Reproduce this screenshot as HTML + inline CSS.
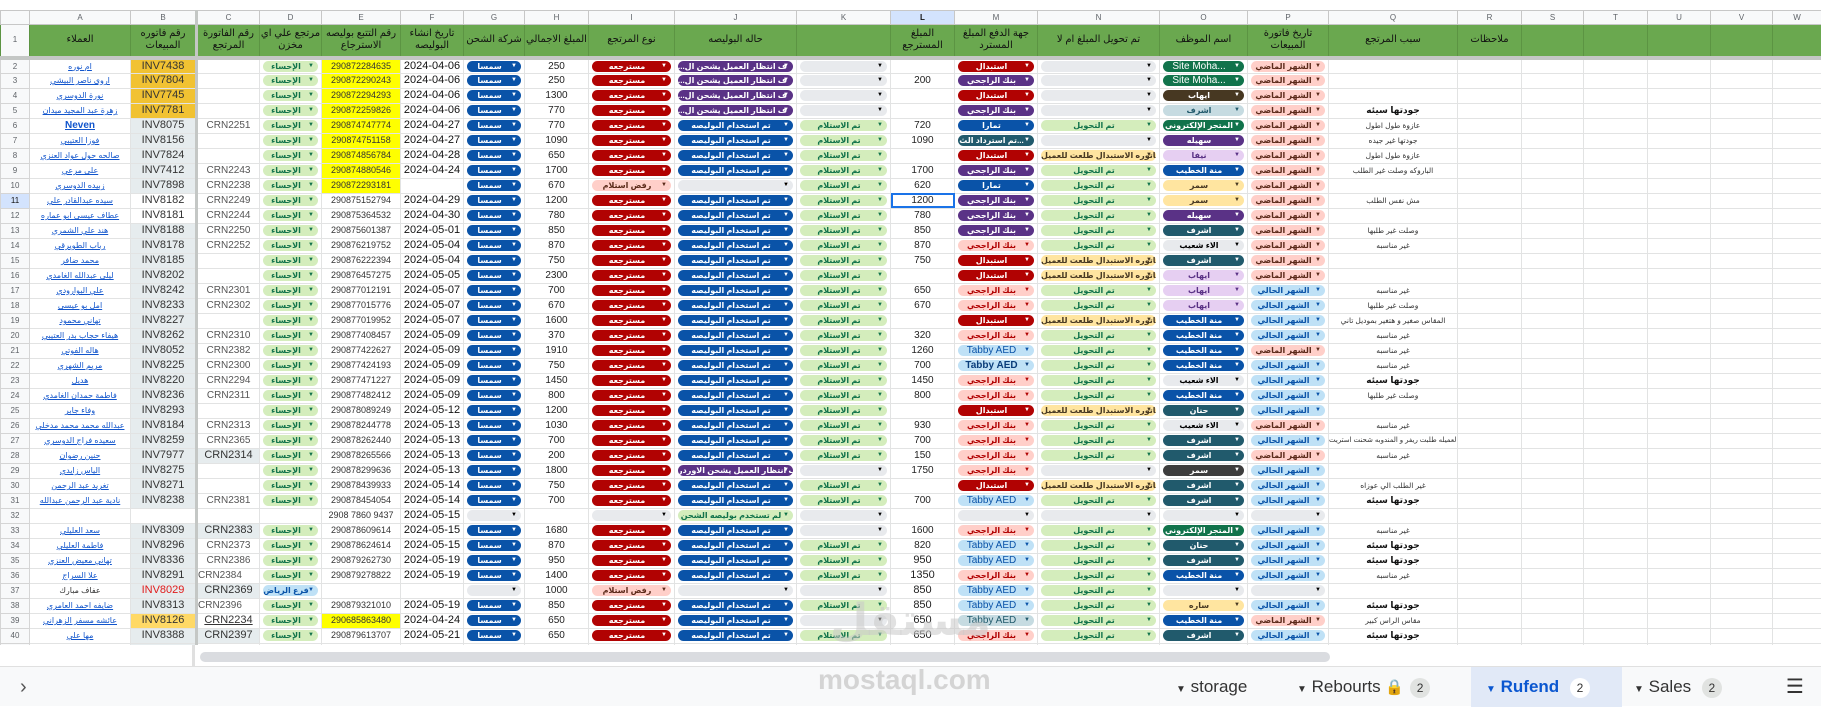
<!DOCTYPE html>
<html><head><meta charset="utf-8">
<style>
*{box-sizing:border-box;margin:0;padding:0}
body{width:1821px;height:706px;overflow:hidden;background:#fff;font-family:"Liberation Sans","DejaVu Sans",sans-serif;position:relative}
#grid{position:absolute;left:0;top:10px;width:1821px;height:635px;overflow:hidden}
table{border-collapse:collapse;table-layout:fixed;width:1821px}
td{border:1px solid #e2e3e3;height:15px;padding:0;font-size:10px;text-align:center;white-space:nowrap;overflow:hidden;color:#222;line-height:13px}
tr.ch0 td{height:14px;background:#f8f9fa;color:#5f6368;font-size:8px;border-color:#c7c7c7}
tr.h td{height:33px;background:#6aa84f;color:#111;font-size:10px;line-height:12px;white-space:normal;border-color:#5c9443;border-bottom:4px solid #c4c7c5}
td.n{background:#f8f9fa;color:#5f6368;font-size:8px;border-color:#d5d5d5}
td.b{border-right:3px solid #c4c7c5;background:#e6ecee;color:#333;font-size:11px}
td.bo{background:#f1c232}
td.bw{background:#fff}
td.c{color:#555;font-size:10px}
td.cb{background:#e6ecee;color:#333;font-size:11px}
td.a a{color:#1155cc;text-decoration:underline;font-size:8px}
td.e{font-size:9px;color:#333}
td.y{background:#ffff00}
td.f{font-size:11px;color:#111}
td.q{font-size:7.5px;color:#333}
td.qb{font-size:9px;font-weight:bold;color:#111}
i{font-style:normal}
.k{display:block;margin:0 3px;height:11px;border-radius:6px;font-size:8px;font-weight:bold;line-height:11px;text-align:center;position:relative;padding-right:9px;overflow:hidden;white-space:nowrap}
.k:after{content:"▼";position:absolute;right:4px;top:0;font-size:6px}
.lg{background:#d4edbc;color:#11734b}.db{background:#0a53a8;color:#fff}.rd{background:#b10202;color:#fff}
.pc{background:#ffcfc9;color:#5b2a1a}.gy{background:#e8eaed;color:#000}.pu{background:#5a3286;color:#fff}
.pk{background:#ffcfc9;color:#b10202}.lb{background:#bfe1f6;color:#0a53a8}.tl{background:#215a6c;color:#fff}
.yl{background:#ffe5a0;color:#473822}.gr{background:#11734b;color:#fff}.br{background:#473822;color:#fff}
.lp{background:#e6cff2;color:#5a3286}.dk{background:#3d3d3d;color:#fff}.sg{background:#c6dbe1;color:#215a6c}
.tb{font-size:10px;font-weight:normal}
#sb{position:absolute;left:200px;top:652px;width:1130px;height:10px;background:#dadce0;border-radius:5px}
#tabs{position:absolute;left:0;top:666px;width:1821px;height:40px;background:#f8f9fa;border-top:1px solid #e0e0e0;font-size:17px;color:#333}
.t{position:absolute;top:0;height:40px;line-height:40px}
.bd{display:inline-block;width:20px;height:20px;line-height:20px;border-radius:10px;background:#e1e3e1;font-size:12px;text-align:center;margin-left:6px;vertical-align:middle}
#wm{position:absolute;left:818px;top:664px;font-size:28px;color:#d4d4d4;font-weight:bold}
#wm2{position:absolute;left:830px;top:595px;font-size:44px;color:rgba(200,200,200,.55);font-weight:bold;font-family:"DejaVu Sans",sans-serif}
</style></head><body>
<div id="grid">
<table>
<colgroup><col style="width:29px"><col style="width:101px"><col style="width:66px"><col style="width:63px"><col style="width:62px"><col style="width:79px"><col style="width:63px"><col style="width:61px"><col style="width:64px"><col style="width:86px"><col style="width:122px"><col style="width:94px"><col style="width:64px"><col style="width:83px"><col style="width:122px"><col style="width:88px"><col style="width:81px"><col style="width:129px"><col style="width:64px"><col style="width:62px"><col style="width:64px"><col style="width:63px"><col style="width:62px"><col style="width:49px"></colgroup>
<tr class="ch0"><td></td><td>A</td><td style="border-right:3px solid #c4c7c5">B</td><td>C</td><td>D</td><td>E</td><td>F</td><td>G</td><td>H</td><td>I</td><td>J</td><td>K</td><td style="background:#d3e3fd;color:#111;font-weight:bold">L</td><td>M</td><td>N</td><td>O</td><td>P</td><td>Q</td><td>R</td><td>S</td><td>T</td><td>U</td><td>V</td><td>W</td></tr>
<tr class="h"><td style="background:#f8f9fa;color:#5f6368;font-size:8px">1</td><td>العملاء</td><td style="border-right:3px solid #c4c7c5">رقم فاتوره المبيعات</td><td>رقم الفاتورة المرتجع</td><td>مرتجع علي اي مخزن</td><td>رقم التتبع بوليصه الاسترجاع</td><td>تاريخ انشاء البوليصه</td><td>شركة الشحن</td><td>المبلغ الاجمالي</td><td>نوع المرتجع</td><td>حاله البوليصه</td><td></td><td>المبلغ المسترجع</td><td>جهة الدفع المبلغ المسترد</td><td>تم تحويل المبلغ ام لا</td><td>اسم الموظف</td><td>تاريخ فاتورة المبيعات</td><td>سبب المرتجع</td><td>ملاحظات</td><td></td><td></td><td></td><td></td><td></td></tr>

<tr><td class="n">2</td><td class="a"><a>ام نوره</a></td><td class="b bo">INV7438</td><td class="c"></td><td><i class="k lg">الإحساء</i></td><td class="e y">290872284635</td><td class="f">2024-04-06</td><td><i class="k db">سمسا</i></td><td>250</td><td><i class="k rd">مسترجعه</i></td><td><i class="k pu">...ف انتظار العميل يشحن ال</i></td><td><i class="k gy"></i></td><td></td><td><i class="k rd">استبدال</i></td><td><i class="k gy"></i></td><td><i class="k gr tb">Site Moha...</i></td><td><i class="k pc">الشهر الماضي</i></td><td class="q"></td><td></td><td></td><td></td><td></td><td></td><td></td></tr>
<tr><td class="n">3</td><td class="a"><a>اروى ناصر البيشي</a></td><td class="b bo">INV7804</td><td class="c"></td><td><i class="k lg">الإحساء</i></td><td class="e y">290872290243</td><td class="f">2024-04-06</td><td><i class="k db">سمسا</i></td><td>250</td><td><i class="k rd">مسترجعه</i></td><td><i class="k pu">...ف انتظار العميل يشحن ال</i></td><td><i class="k gy"></i></td><td>200</td><td><i class="k pu">بنك الراجحي</i></td><td><i class="k gy"></i></td><td><i class="k gr tb">Site Moha...</i></td><td><i class="k pc">الشهر الماضي</i></td><td class="q"></td><td></td><td></td><td></td><td></td><td></td><td></td></tr>
<tr><td class="n">4</td><td class="a"><a>نورة الدوسري</a></td><td class="b bo">INV7745</td><td class="c"></td><td><i class="k lg">الإحساء</i></td><td class="e y">290872294293</td><td class="f">2024-04-06</td><td><i class="k db">سمسا</i></td><td>1300</td><td><i class="k rd">مسترجعه</i></td><td><i class="k pu">...ف انتظار العميل يشحن ال</i></td><td><i class="k gy"></i></td><td></td><td><i class="k rd">استبدال</i></td><td><i class="k gy"></i></td><td><i class="k br">ايهاب</i></td><td><i class="k pc">الشهر الماضي</i></td><td class="q"></td><td></td><td></td><td></td><td></td><td></td><td></td></tr>
<tr><td class="n">5</td><td class="a"><a>زهرة عبد المجيد ميدان</a></td><td class="b bo">INV7781</td><td class="c"></td><td><i class="k lg">الإحساء</i></td><td class="e y">290872259826</td><td class="f">2024-04-06</td><td><i class="k db">سمسا</i></td><td>770</td><td><i class="k rd">مسترجعه</i></td><td><i class="k pu">...ف انتظار العميل يشحن ال</i></td><td><i class="k gy"></i></td><td></td><td><i class="k pu">بنك الراجحي</i></td><td><i class="k gy"></i></td><td><i class="k sg">اشرف</i></td><td><i class="k pc">الشهر الماضي</i></td><td class="qb">جودتها سيئه</td><td></td><td></td><td></td><td></td><td></td><td></td></tr>
<tr><td class="n">6</td><td class="a"><a style="font-size:10px;font-weight:bold">Neven</a></td><td class="b">INV8075</td><td class="c">CRN2251</td><td><i class="k lg">الإحساء</i></td><td class="e y">290874747774</td><td class="f">2024-04-27</td><td><i class="k db">سمسا</i></td><td>770</td><td><i class="k rd">مسترجعه</i></td><td><i class="k db">تم استخدام البوليصه</i></td><td><i class="k lg">تم الاستلام</i></td><td>720</td><td><i class="k db">تمارا</i></td><td><i class="k lg">تم التحويل</i></td><td><i class="k gr">المتجر الإلكتروني</i></td><td><i class="k pc">الشهر الماضي</i></td><td class="q">عازوة طول اطول</td><td></td><td></td><td></td><td></td><td></td><td></td></tr>
<tr><td class="n">7</td><td class="a"><a>فوزا العتيبي</a></td><td class="b">INV8156</td><td class="c"></td><td><i class="k lg">الإحساء</i></td><td class="e y">290874751158</td><td class="f">2024-04-27</td><td><i class="k db">سمسا</i></td><td>1090</td><td><i class="k rd">مسترجعه</i></td><td><i class="k db">تم استخدام البوليصه</i></td><td><i class="k lg">تم الاستلام</i></td><td>1090</td><td><i class="k tl">تم استرداد الث...</i></td><td><i class="k gy"></i></td><td><i class="k pu">سهيله</i></td><td><i class="k pc">الشهر الماضي</i></td><td class="q">جودتها غير جيده</td><td></td><td></td><td></td><td></td><td></td><td></td></tr>
<tr><td class="n">8</td><td class="a"><a>صالحه حول عواد العنزي</a></td><td class="b">INV7824</td><td class="c"></td><td><i class="k lg">الإحساء</i></td><td class="e y">290874856784</td><td class="f">2024-04-28</td><td><i class="k db">سمسا</i></td><td>650</td><td><i class="k rd">مسترجعه</i></td><td><i class="k db">تم استخدام البوليصه</i></td><td><i class="k lg">تم الاستلام</i></td><td></td><td><i class="k rd">استبدال</i></td><td><i class="k yl">فاتوره الاستبدال طلعت للعميل</i></td><td><i class="k lp">نيفا</i></td><td><i class="k pc">الشهر الماضي</i></td><td class="q">عازوة طول اطول</td><td></td><td></td><td></td><td></td><td></td><td></td></tr>
<tr><td class="n">9</td><td class="a"><a>على مرعي</a></td><td class="b">INV7412</td><td class="c">CRN2243</td><td><i class="k lg">الإحساء</i></td><td class="e y">290874880546</td><td class="f">2024-04-24</td><td><i class="k db">سمسا</i></td><td>1700</td><td><i class="k rd">مسترجعه</i></td><td><i class="k db">تم استخدام البوليصه</i></td><td><i class="k lg">تم الاستلام</i></td><td>1700</td><td><i class="k pu">بنك الراجحي</i></td><td><i class="k lg">تم التحويل</i></td><td><i class="k db">منة الخطيب</i></td><td><i class="k pc">الشهر الماضي</i></td><td class="q">الباروكه وصلت غير الطلب</td><td></td><td></td><td></td><td></td><td></td><td></td></tr>
<tr><td class="n">10</td><td class="a"><a>زبيده الدوسري</a></td><td class="b">INV7898</td><td class="c">CRN2238</td><td><i class="k lg">الإحساء</i></td><td class="e y">290872293181</td><td class="f"></td><td><i class="k db">سمسا</i></td><td>670</td><td><i class="k pc">رفض استلام</i></td><td><i class="k gy"></i></td><td><i class="k lg">تم الاستلام</i></td><td>620</td><td><i class="k db">تمارا</i></td><td><i class="k lg">تم التحويل</i></td><td><i class="k yl">سمر</i></td><td><i class="k pc">الشهر الماضي</i></td><td class="q"></td><td></td><td></td><td></td><td></td><td></td><td></td></tr>
<tr><td class="n" style="background:#d3e3fd;color:#111">11</td><td class="a"><a>سيده عبدالقادر علي</a></td><td class="b bw">INV8182</td><td class="c">CRN2249</td><td><i class="k lg">الإحساء</i></td><td class="e">290875152794</td><td class="f">2024-04-29</td><td><i class="k db">سمسا</i></td><td>1200</td><td><i class="k rd">مسترجعه</i></td><td><i class="k db">تم استخدام البوليصه</i></td><td><i class="k lg">تم الاستلام</i></td><td style="outline:2px solid #1a73e8;outline-offset:-2px">1200</td><td><i class="k pu">بنك الراجحي</i></td><td><i class="k lg">تم التحويل</i></td><td><i class="k yl">سمر</i></td><td><i class="k pc">الشهر الماضي</i></td><td class="q">مش نفس الطلب</td><td></td><td></td><td></td><td></td><td></td><td></td></tr>
<tr><td class="n">12</td><td class="a"><a>عطاف عيسى ابو عماره</a></td><td class="b bw">INV8181</td><td class="c">CRN2244</td><td><i class="k lg">الإحساء</i></td><td class="e">290875364532</td><td class="f">2024-04-30</td><td><i class="k db">سمسا</i></td><td>780</td><td><i class="k rd">مسترجعه</i></td><td><i class="k db">تم استخدام البوليصه</i></td><td><i class="k lg">تم الاستلام</i></td><td>780</td><td><i class="k pu">بنك الراجحي</i></td><td><i class="k lg">تم التحويل</i></td><td><i class="k pu">سهيله</i></td><td><i class="k pc">الشهر الماضي</i></td><td class="q"></td><td></td><td></td><td></td><td></td><td></td><td></td></tr>
<tr><td class="n">13</td><td class="a"><a>هند علي الشمري</a></td><td class="b">INV8188</td><td class="c">CRN2250</td><td><i class="k lg">الاحساء</i></td><td class="e">290875601387</td><td class="f">2024-05-01</td><td><i class="k db">سمسا</i></td><td>850</td><td><i class="k rd">مسترجعه</i></td><td><i class="k db">تم استخدام البوليصه</i></td><td><i class="k lg">تم الاستلام</i></td><td>850</td><td><i class="k pu">بنك الراجحي</i></td><td><i class="k lg">تم التحويل</i></td><td><i class="k tl">اشرف</i></td><td><i class="k pc">الشهر الماضي</i></td><td class="q">وصلت غير طلبها</td><td></td><td></td><td></td><td></td><td></td><td></td></tr>
<tr><td class="n">14</td><td class="a"><a>رباب الطويرقي</a></td><td class="b">INV8178</td><td class="c">CRN2252</td><td><i class="k lg">الاحساء</i></td><td class="e">290876219752</td><td class="f">2024-05-04</td><td><i class="k db">سمسا</i></td><td>870</td><td><i class="k rd">مسترجعه</i></td><td><i class="k db">تم استخدام البوليصه</i></td><td><i class="k lg">تم الاستلام</i></td><td>870</td><td><i class="k pk">بنك الراجحي</i></td><td><i class="k lg">تم التحويل</i></td><td><i class="k gy">الاء شعيب</i></td><td><i class="k pc">الشهر الماضي</i></td><td class="q">غير مناسبه</td><td></td><td></td><td></td><td></td><td></td><td></td></tr>
<tr><td class="n">15</td><td class="a"><a>محمد ضافر</a></td><td class="b">INV8185</td><td class="c"></td><td><i class="k lg">الاحساء</i></td><td class="e">290876222394</td><td class="f">2024-05-04</td><td><i class="k db">سمسا</i></td><td>750</td><td><i class="k rd">مسترجعه</i></td><td><i class="k db">تم استخدام البوليصه</i></td><td><i class="k lg">تم الاستلام</i></td><td>750</td><td><i class="k rd">استبدال</i></td><td><i class="k yl">فاتوره الاستبدال طلعت للعميل</i></td><td><i class="k tl">اشرف</i></td><td><i class="k pc">الشهر الماضي</i></td><td class="q"></td><td></td><td></td><td></td><td></td><td></td><td></td></tr>
<tr><td class="n">16</td><td class="a"><a>ليلى عبدالله الغامدي</a></td><td class="b">INV8202</td><td class="c"></td><td><i class="k lg">الاحساء</i></td><td class="e">290876457275</td><td class="f">2024-05-05</td><td><i class="k db">سمسا</i></td><td>2300</td><td><i class="k rd">مسترجعه</i></td><td><i class="k db">تم استخدام البوليصه</i></td><td><i class="k lg">تم الاستلام</i></td><td></td><td><i class="k rd">استبدال</i></td><td><i class="k yl">فاتوره الاستبدال طلعت للعميل</i></td><td><i class="k lp">ايهاب</i></td><td><i class="k pc">الشهر الماضي</i></td><td class="q"></td><td></td><td></td><td></td><td></td><td></td><td></td></tr>
<tr><td class="n">17</td><td class="a"><a>علي البوارودي</a></td><td class="b">INV8242</td><td class="c">CRN2301</td><td><i class="k lg">الإحساء</i></td><td class="e">290877012191</td><td class="f">2024-05-07</td><td><i class="k db">سمسا</i></td><td>700</td><td><i class="k rd">مسترجعه</i></td><td><i class="k db">تم استخدام البوليصه</i></td><td><i class="k lg">تم الاستلام</i></td><td>650</td><td><i class="k pk">بنك الراجحي</i></td><td><i class="k lg">تم التحويل</i></td><td><i class="k lp">ايهاب</i></td><td><i class="k lb">الشهر الحالي</i></td><td class="q">غير مناسبه</td><td></td><td></td><td></td><td></td><td></td><td></td></tr>
<tr><td class="n">18</td><td class="a"><a>امل بو عيسى</a></td><td class="b">INV8233</td><td class="c">CRN2302</td><td><i class="k lg">الإحساء</i></td><td class="e">290877015776</td><td class="f">2024-05-07</td><td><i class="k db">سمسا</i></td><td>670</td><td><i class="k rd">مسترجعه</i></td><td><i class="k db">تم استخدام البوليصه</i></td><td><i class="k lg">تم الاستلام</i></td><td>670</td><td><i class="k pk">بنك الراجحي</i></td><td><i class="k lg">تم التحويل</i></td><td><i class="k lp">ايهاب</i></td><td><i class="k lb">الشهر الحالي</i></td><td class="q">وصلت غير طلبها</td><td></td><td></td><td></td><td></td><td></td><td></td></tr>
<tr><td class="n">19</td><td class="a"><a>تهاني محمود</a></td><td class="b">INV8227</td><td class="c"></td><td><i class="k lg">الإحساء</i></td><td class="e">290877019952</td><td class="f">2024-05-07</td><td><i class="k db">سمسا</i></td><td>1600</td><td><i class="k rd">مسترجعه</i></td><td><i class="k db">تم استخدام البوليصه</i></td><td><i class="k lg">تم الاستلام</i></td><td></td><td><i class="k rd">استبدال</i></td><td><i class="k yl">فاتوره الاستبدال طلعت للعميل</i></td><td><i class="k db">منة الخطيب</i></td><td><i class="k lb">الشهر الحالي</i></td><td class="q">المقاس صغير و هتغير بموديل تاني</td><td></td><td></td><td></td><td></td><td></td><td></td></tr>
<tr><td class="n">20</td><td class="a"><a>هيفاء حجاب بدر العتيبي</a></td><td class="b">INV8262</td><td class="c">CRN2310</td><td><i class="k lg">الإحساء</i></td><td class="e">290877408457</td><td class="f">2024-05-09</td><td><i class="k db">سمسا</i></td><td>370</td><td><i class="k rd">مسترجعه</i></td><td><i class="k db">تم استخدام البوليصه</i></td><td><i class="k lg">تم الاستلام</i></td><td>320</td><td><i class="k pk">بنك الراجحي</i></td><td><i class="k lg">تم التحويل</i></td><td><i class="k db">منة الخطيب</i></td><td><i class="k lb">الشهر الحالي</i></td><td class="q">غير مناسبه</td><td></td><td></td><td></td><td></td><td></td><td></td></tr>
<tr><td class="n">21</td><td class="a"><a>هاله الفوتي</a></td><td class="b">INV8052</td><td class="c">CRN2382</td><td><i class="k lg">الإحساء</i></td><td class="e">290877422627</td><td class="f">2024-05-09</td><td><i class="k db">سمسا</i></td><td>1910</td><td><i class="k rd">مسترجعه</i></td><td><i class="k db">تم استخدام البوليصه</i></td><td><i class="k lg">تم الاستلام</i></td><td>1260</td><td><i class="k lb tb">Tabby AED</i></td><td><i class="k lg">تم التحويل</i></td><td><i class="k db">منة الخطيب</i></td><td><i class="k pc">الشهر الماضي</i></td><td class="q">غير مناسبه</td><td></td><td></td><td></td><td></td><td></td><td></td></tr>
<tr><td class="n">22</td><td class="a"><a>مريم الشهري</a></td><td class="b">INV8225</td><td class="c">CRN2300</td><td><i class="k lg">الإحساء</i></td><td class="e">290877424193</td><td class="f">2024-05-09</td><td><i class="k db">سمسا</i></td><td>750</td><td><i class="k rd">مسترجعه</i></td><td><i class="k db">تم استخدام البوليصه</i></td><td><i class="k lg">تم الاستلام</i></td><td>700</td><td><i class="k lb tb" style="font-weight:bold;color:#0a3d7a">Tabby AED</i></td><td><i class="k lg">تم التحويل</i></td><td><i class="k db">منة الخطيب</i></td><td><i class="k lb">الشهر الحالي</i></td><td class="q">غير مناسبه</td><td></td><td></td><td></td><td></td><td></td><td></td></tr>
<tr><td class="n">23</td><td class="a"><a>هديل</a></td><td class="b">INV8220</td><td class="c">CRN2294</td><td><i class="k lg">الإحساء</i></td><td class="e">290877471227</td><td class="f">2024-05-09</td><td><i class="k db">سمسا</i></td><td>1450</td><td><i class="k rd">مسترجعه</i></td><td><i class="k db">تم استخدام البوليصه</i></td><td><i class="k lg">تم الاستلام</i></td><td>1450</td><td><i class="k pk">بنك الراجحي</i></td><td><i class="k lg">تم التحويل</i></td><td><i class="k gy">الاء شعيب</i></td><td><i class="k lb">الشهر الحالي</i></td><td class="qb">جودتها سيئه</td><td></td><td></td><td></td><td></td><td></td><td></td></tr>
<tr><td class="n">24</td><td class="a"><a>فاطمة حمدان الغامدي</a></td><td class="b">INV8236</td><td class="c">CRN2311</td><td><i class="k lg">الإحساء</i></td><td class="e">290877482412</td><td class="f">2024-05-09</td><td><i class="k db">سمسا</i></td><td>800</td><td><i class="k rd">مسترجعه</i></td><td><i class="k db">تم استخدام البوليصه</i></td><td><i class="k lg">تم الاستلام</i></td><td>800</td><td><i class="k pk">بنك الراجحي</i></td><td><i class="k lg">تم التحويل</i></td><td><i class="k db">منة الخطيب</i></td><td><i class="k lb">الشهر الحالي</i></td><td class="q">وصلت غير طلبها</td><td></td><td></td><td></td><td></td><td></td><td></td></tr>
<tr><td class="n">25</td><td class="a"><a>وفاء جابر</a></td><td class="b">INV8293</td><td class="c"></td><td><i class="k lg">الإحساء</i></td><td class="e">290878089249</td><td class="f">2024-05-12</td><td><i class="k db">سمسا</i></td><td>1200</td><td><i class="k rd">مسترجعه</i></td><td><i class="k db">تم استخدام البوليصه</i></td><td><i class="k lg">تم الاستلام</i></td><td></td><td><i class="k rd">استبدال</i></td><td><i class="k yl">فاتوره الاستبدال طلعت للعميل</i></td><td><i class="k tl">حنان</i></td><td><i class="k lb">الشهر الحالي</i></td><td class="q"></td><td></td><td></td><td></td><td></td><td></td><td></td></tr>
<tr><td class="n">26</td><td class="a"><a>عبدالله محمد محمد مدخلي</a></td><td class="b">INV8184</td><td class="c">CRN2313</td><td><i class="k lg">الإحساء</i></td><td class="e">290878244778</td><td class="f">2024-05-13</td><td><i class="k db">سمسا</i></td><td>1030</td><td><i class="k rd">مسترجعه</i></td><td><i class="k db">تم استخدام البوليصه</i></td><td><i class="k lg">تم الاستلام</i></td><td>930</td><td><i class="k pk">بنك الراجحي</i></td><td><i class="k lg">تم التحويل</i></td><td><i class="k gy">الاء شعيب</i></td><td><i class="k pc">الشهر الماضي</i></td><td class="q">غير مناسبه</td><td></td><td></td><td></td><td></td><td></td><td></td></tr>
<tr><td class="n">27</td><td class="a"><a>سعيده فراج الدوسري</a></td><td class="b">INV8259</td><td class="c">CRN2365</td><td><i class="k lg">الإحساء</i></td><td class="e">290878262440</td><td class="f">2024-05-13</td><td><i class="k db">سمسا</i></td><td>700</td><td><i class="k rd">مسترجعه</i></td><td><i class="k db">تم استخدام البوليصه</i></td><td><i class="k lg">تم الاستلام</i></td><td>700</td><td><i class="k pk">بنك الراجحي</i></td><td><i class="k lg">تم التحويل</i></td><td><i class="k tl">اشرف</i></td><td><i class="k lb">الشهر الحالي</i></td><td class="q" style="font-size:7px">العميله طلبت ريفر و المندوبه شحنت استريت</td><td></td><td></td><td></td><td></td><td></td><td></td></tr>
<tr><td class="n">28</td><td class="a"><a>حنين رضوان</a></td><td class="b">INV7977</td><td class="cb">CRN2314</td><td><i class="k lg">الإحساء</i></td><td class="e">290878265566</td><td class="f">2024-05-13</td><td><i class="k db">سمسا</i></td><td>200</td><td><i class="k rd">مسترجعه</i></td><td><i class="k db">تم استخدام البوليصه</i></td><td><i class="k lg">تم الاستلام</i></td><td>150</td><td><i class="k pk">بنك الراجحي</i></td><td><i class="k lg">تم التحويل</i></td><td><i class="k tl">اشرف</i></td><td><i class="k pc">الشهر الماضي</i></td><td class="q">غير مناسبه</td><td></td><td></td><td></td><td></td><td></td><td></td></tr>
<tr><td class="n">29</td><td class="a"><a>الياس زايدي</a></td><td class="b">INV8275</td><td class="c"></td><td><i class="k lg">الإحساء</i></td><td class="e">290878299636</td><td class="f">2024-05-13</td><td><i class="k db">سمسا</i></td><td>1800</td><td><i class="k rd">مسترجعه</i></td><td><i class="k pu">ف انتظار العميل يشحن الاوردر</i></td><td><i class="k gy"></i></td><td>1750</td><td><i class="k pk">بنك الراجحي</i></td><td><i class="k gy"></i></td><td><i class="k dk">سمر</i></td><td><i class="k lb">الشهر الحالي</i></td><td class="q"></td><td></td><td></td><td></td><td></td><td></td><td></td></tr>
<tr><td class="n">30</td><td class="a"><a>تغريد عبد الرحمن</a></td><td class="b">INV8271</td><td class="c"></td><td><i class="k lg">الإحساء</i></td><td class="e">290878439933</td><td class="f">2024-05-14</td><td><i class="k db">سمسا</i></td><td>750</td><td><i class="k rd">مسترجعه</i></td><td><i class="k db">تم استخدام البوليصه</i></td><td><i class="k lg">تم الاستلام</i></td><td></td><td><i class="k rd">استبدال</i></td><td><i class="k yl">فاتوره الاستبدال طلعت للعميل</i></td><td><i class="k tl">اشرف</i></td><td><i class="k lb">الشهر الحالي</i></td><td class="q">غير الطلب الي عوزاه</td><td></td><td></td><td></td><td></td><td></td><td></td></tr>
<tr><td class="n">31</td><td class="a"><a>نادية عبد الرحمن عبدالله</a></td><td class="b">INV8238</td><td class="c">CRN2381</td><td><i class="k lg">الإحساء</i></td><td class="e">290878454054</td><td class="f">2024-05-14</td><td><i class="k db">سمسا</i></td><td>700</td><td><i class="k rd">مسترجعه</i></td><td><i class="k db">تم استخدام البوليصه</i></td><td><i class="k lg">تم الاستلام</i></td><td>700</td><td><i class="k lb tb">Tabby AED</i></td><td><i class="k lg">تم التحويل</i></td><td><i class="k tl">اشرف</i></td><td><i class="k lb">الشهر الحالي</i></td><td class="qb">جودتها سيئه</td><td></td><td></td><td></td><td></td><td></td><td></td></tr>
<tr><td class="n">32</td><td class="a"></td><td class="b bw"></td><td class="c"></td><td></td><td class="e">2908 7860 9437</td><td class="f">2024-05-15</td><td><i class="k gy"></i></td><td></td><td><i class="k gy"></i></td><td><i class="k lg">لم تستخدم بوليصه الشحن</i></td><td><i class="k gy"></i></td><td></td><td><i class="k gy"></i></td><td><i class="k gy"></i></td><td><i class="k gy"></i></td><td><i class="k gy"></i></td><td class="q"></td><td></td><td></td><td></td><td></td><td></td><td></td></tr>
<tr><td class="n">33</td><td class="a"><a>سعد العليلي</a></td><td class="b">INV8309</td><td class="cb">CRN2383</td><td><i class="k lg">الإحساء</i></td><td class="e">290878609614</td><td class="f">2024-05-15</td><td><i class="k db">سمسا</i></td><td>1680</td><td><i class="k rd">مسترجعه</i></td><td><i class="k db">تم استخدام البوليصه</i></td><td><i class="k gy"></i></td><td>1600</td><td><i class="k pk">بنك الراجحي</i></td><td><i class="k lg">تم التحويل</i></td><td><i class="k gr">المتجر الإلكتروني</i></td><td><i class="k lb">الشهر الحالي</i></td><td class="q">غير مناسبه</td><td></td><td></td><td></td><td></td><td></td><td></td></tr>
<tr><td class="n">34</td><td class="a"><a>فاطمة العليلي</a></td><td class="b">INV8296</td><td class="c">CRN2373</td><td><i class="k lg">الإحساء</i></td><td class="e">290878624614</td><td class="f">2024-05-15</td><td><i class="k db">سمسا</i></td><td>870</td><td><i class="k rd">مسترجعه</i></td><td><i class="k db">تم استخدام البوليصه</i></td><td><i class="k lg">تم الاستلام</i></td><td>820</td><td><i class="k lb tb">Tabby AED</i></td><td><i class="k lg">تم التحويل</i></td><td><i class="k tl">حنان</i></td><td><i class="k lb">الشهر الحالي</i></td><td class="qb">جودتها سيئه</td><td></td><td></td><td></td><td></td><td></td><td></td></tr>
<tr><td class="n">35</td><td class="a"><a>تهاني معيض العنزي</a></td><td class="b">INV8336</td><td class="c">CRN2386</td><td><i class="k lg">الإحساء</i></td><td class="e">290879262730</td><td class="f">2024-05-19</td><td><i class="k db">سمسا</i></td><td>950</td><td><i class="k rd">مسترجعه</i></td><td><i class="k db">تم استخدام البوليصه</i></td><td><i class="k lg">تم الاستلام</i></td><td style="font-size:11px">950</td><td><i class="k lb tb">Tabby AED</i></td><td><i class="k lg">تم التحويل</i></td><td><i class="k tl">اشرف</i></td><td><i class="k lb">الشهر الحالي</i></td><td class="qb">جودتها سيئه</td><td></td><td></td><td></td><td></td><td></td><td></td></tr>
<tr><td class="n">36</td><td class="a"><a>علا السراج</a></td><td class="b">INV8291</td><td class="c" style="text-align:left">CRN2384</td><td><i class="k lg">الإحساء</i></td><td class="e">290879278822</td><td class="f">2024-05-19</td><td><i class="k db">سمسا</i></td><td>1400</td><td><i class="k rd">مسترجعه</i></td><td><i class="k db">تم استخدام البوليصه</i></td><td><i class="k lg">تم الاستلام</i></td><td style="font-size:11px">1350</td><td><i class="k pk">بنك الراجحي</i></td><td><i class="k lg">تم التحويل</i></td><td><i class="k db">منة الخطيب</i></td><td><i class="k lb">الشهر الحالي</i></td><td class="q">غير مناسبه</td><td></td><td></td><td></td><td></td><td></td><td></td></tr>
<tr><td class="n">37</td><td class="a"><a style="color:#333;text-decoration:none">عفاف مبارك</a></td><td class="b" style="color:#e01b1b">INV8029</td><td class="cb">CRN2369</td><td><i class="k lb">فرع الرياض</i></td><td class="e"></td><td class="f"></td><td><i class="k gy"></i></td><td>1000</td><td><i class="k pc">رفض استلام</i></td><td><i class="k gy"></i></td><td><i class="k gy"></i></td><td style="font-size:11px">850</td><td><i class="k lb tb">Tabby AED</i></td><td><i class="k lg">تم التحويل</i></td><td><i class="k gy"></i></td><td><i class="k gy"></i></td><td class="q"></td><td></td><td></td><td></td><td></td><td></td><td></td></tr>
<tr><td class="n">38</td><td class="a"><a>ضايفه احمد العامري</a></td><td class="b">INV8313</td><td class="c" style="text-align:left">CRN2396</td><td><i class="k lg">الإحساء</i></td><td class="e">290879321010</td><td class="f">2024-05-19</td><td><i class="k db">سمسا</i></td><td>850</td><td><i class="k rd">مسترجعه</i></td><td><i class="k db">تم استخدام البوليصه</i></td><td><i class="k lg">تم الاستلام</i></td><td style="font-size:11px">850</td><td><i class="k lb tb">Tabby AED</i></td><td><i class="k lg">تم التحويل</i></td><td><i class="k yl">ساره</i></td><td><i class="k lb">الشهر الحالي</i></td><td class="qb">جودتها سيئه</td><td></td><td></td><td></td><td></td><td></td><td></td></tr>
<tr><td class="n">39</td><td class="a"><a>عائشه مسفر الزهراني</a></td><td class="b bo" style="background:#ffd966">INV8126</td><td class="c" style="text-decoration:underline;color:#333;font-size:11px">CRN2234</td><td><i class="k lg">الإحساء</i></td><td class="e y">290685863480</td><td class="f">2024-04-24</td><td><i class="k db">سمسا</i></td><td>650</td><td><i class="k rd">مسترجعه</i></td><td><i class="k db">تم استخدام البوليصه</i></td><td><i class="k gy"></i></td><td style="font-size:11px">650</td><td><i class="k sg tb">Tabby AED</i></td><td><i class="k lg">تم التحويل</i></td><td><i class="k db">منة الخطيب</i></td><td><i class="k pc">الشهر الماضي</i></td><td class="q">مقاس الراس كبير</td><td></td><td></td><td></td><td></td><td></td><td></td></tr>
<tr><td class="n">40</td><td class="a"><a>مها علي</a></td><td class="b">INV8388</td><td class="cb">CRN2397</td><td><i class="k lg">الإحساء</i></td><td class="e">290879613707</td><td class="f">2024-05-21</td><td><i class="k db">سمسا</i></td><td>650</td><td><i class="k rd">مسترجعه</i></td><td><i class="k db">تم استخدام البوليصه</i></td><td><i class="k lg">تم الاستلام</i></td><td style="font-size:11px">650</td><td><i class="k pk">بنك الراجحي</i></td><td><i class="k lg">تم التحويل</i></td><td><i class="k tl">اشرف</i></td><td><i class="k lb">الشهر الحالي</i></td><td class="qb">جودتها سيئه</td><td></td><td></td><td></td><td></td><td></td><td></td></tr>
<tr><td class="n">41</td><td class="a"><a>منى</a></td><td class="b">INV8357</td><td class="c"></td><td><i class="k lg">الإحساء</i></td><td class="e">290879615404</td><td class="f">2024-05-21</td><td><i class="k db">سمسا</i></td><td>700</td><td><i class="k rd">مسترجعه</i></td><td><i class="k db">تم استخدام البوليصه</i></td><td><i class="k lg">تم الاستلام</i></td><td></td><td><i class="k rd">استبدال</i></td><td><i class="k lp"></i></td><td><i class="k lp"></i></td><td><i class="k lb">الشهر الحالي</i></td><td class="q"></td><td></td><td></td><td></td><td></td><td></td><td></td></tr>
</table>
</div>
<div style="position:absolute;left:0;top:645px;width:195px;height:21px;border-right:3px solid #e0e0e0"></div>
<div id="sb"></div>
<div id="wm2">مستقل</div>
<div id="tabs">
<div class="t" style="left:20px;font-size:20px;color:#555">›</div>
<div class="t" style="left:1176px"><span style="font-size:10px">▼</span> storage</div>
<div class="t" style="left:1297px"><span style="font-size:10px">▼</span> Rebourts <span style="font-size:15px">🔒</span><span class="bd">2</span></div>
<div class="t" style="left:1471px;width:151px;background:#e1e9f7;color:#0b57d0;padding-left:15px;font-weight:bold"><span style="font-size:10px">▼</span> Rufend <span class="bd" style="background:#fff;color:#333;font-weight:normal">2</span></div>
<div class="t" style="left:1634px"><span style="font-size:10px">▼</span> Sales <span class="bd">2</span></div>
<div class="t" style="left:1786px;font-size:20px">☰</div>
</div>
<div id="wm">mostaql.com</div>
</body></html>
